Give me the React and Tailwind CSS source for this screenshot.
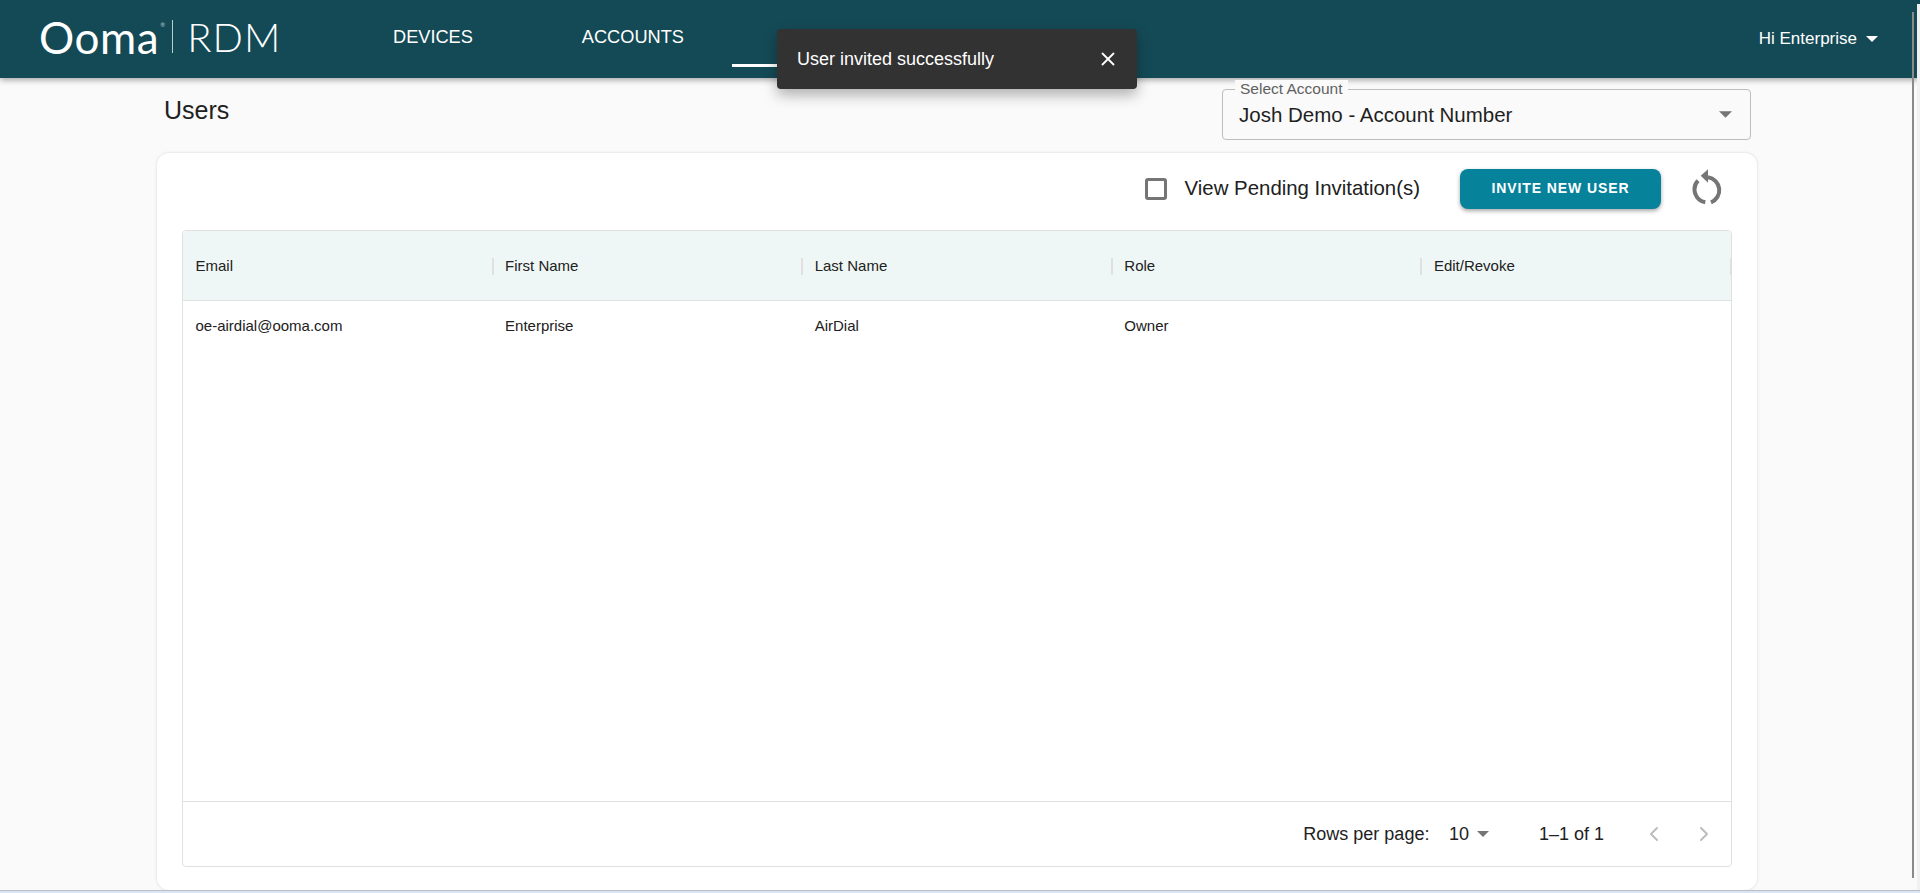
import React from 'react';
import { X, ChevronLeft, ChevronRight } from 'lucide-react';

const columns = ['Email', 'First Name', 'Last Name', 'Role', 'Edit/Revoke'];
const rows = [['oe-airdial@ooma.com', 'Enterprise', 'AirDial', 'Owner', '']];

const Caret = ({ className }) => (
  <svg viewBox="0 0 10 5" className={className} fill="currentColor">
    <path d="M0 0h10L5 5z" />
  </svg>
);

const RefreshIcon = () => (
  <svg viewBox="0 0 32 36" className="mb-[4px] h-9 w-8 text-[#757575]" fill="none" stroke="currentColor">
    <path d="M6 11.700A13 13 0 0 0 13.300 33.300" strokeWidth="4" />
    <path d="M19 33.300A13 13 0 0 0 16 8.300" strokeWidth="4" />
    <path d="M16 .3v13.400L8.700 6.700z" fill="currentColor" stroke="none" />
  </svg>
);

const Header = () => (
  <header className="flex h-[78px] shrink-0 items-center bg-[#144a56] pr-[42px] pl-[39px] text-white shadow-[0_2px_6px_rgba(0,0,0,0.35)]">
    <div className="flex w-[354px] items-center pb-[5px] font-['Lato',sans-serif]">
      <span className="text-[44px] leading-none tracking-[0.6px]">Ooma</span>
      <span className="relative -top-[12px] w-[7px] pl-[1px] text-[6px] leading-none text-[#b8cdd0]">®</span>
      <span className="ml-[6px] h-[33px] w-px bg-[#b8cdd0]" />
      <span className="ml-[14px] text-[40px] leading-none font-light tracking-[1px]">RDM</span>
    </div>
    <nav className="flex h-full items-center text-[18.2px]">
      <span className="mr-[109px] pb-[3px]">DEVICES</span>
      <span className="pb-[3px]">ACCOUNTS</span>
      <div className="relative ml-[48px] flex h-full w-[182px] items-center justify-center">
        <span className="pb-[3px]">USERS</span>
        <span className="absolute right-0 bottom-[11px] left-0 h-[3px] bg-white" />
      </div>
    </nav>
    <div className="ml-auto flex items-center gap-[9px] pb-[1px] text-[17px]">
      <span>Hi Enterprise</span>
      <Caret className="h-[6px] w-[12px]" />
    </div>
  </header>
);

const Toast = () => (
  <div className="absolute top-[29px] left-[777px] flex h-[60px] w-[360px] items-center justify-between rounded bg-[#323232] pr-[18px] pl-[20px] text-[18px] text-white shadow-[0_6px_14px_rgba(0,0,0,0.3)]">
    <span>User invited successfully</span>
    <X className="h-[22px] w-[22px]" strokeWidth={2} />
  </div>
);

const AccountSelect = () => (
  <div className="relative flex h-[51px] w-[529px] items-center justify-between rounded border border-[#bdbdbd] pr-[18px] pl-[16px] text-[20.500px] text-[#1f1f1f]">
    <span className="absolute -top-[10px] left-[12px] bg-[#fafafa] px-[5px] text-[15.500px] leading-[18px] text-[#616161]">Select Account</span>
    <span className="pt-[1px]">Josh Demo - Account Number</span>
    <Caret className="h-[7px] w-[13px] text-[#757575]" />
  </div>
);

const Toolbar = () => (
  <div className="flex h-[71px] items-center justify-end pr-[33px]">
    <span className="mr-[18px] h-[22px] w-[22px] rounded-[3px] border-[3px] border-[#757575]" />
    <span className="mr-[40px] pb-[1px] text-[20.400px] text-[#212121]">View Pending Invitation(s)</span>
    <button className="mr-[31px] h-[40px] w-[201px] rounded-lg bg-[#06829b] text-[14px] font-bold tracking-[0.9px] text-white shadow-[0_2px_4px_rgba(0,0,0,0.35)]">INVITE NEW USER</button>
    <RefreshIcon />
  </div>
);

const UsersTable = () => (
  <div className="mx-[25px] mt-[6px] flex h-[637px] flex-col rounded border border-[#e0e0e0]">
    <div className="grid h-[70px] shrink-0 grid-cols-5 rounded-t border-b border-[#e0e0e0] bg-[#eff7f6]">
      {columns.map((col) => (
        <div key={col} className="flex items-center justify-between pt-[2px] text-[15px] text-[#212121]">
          <span className="pl-[12.500px]">{col}</span>
          <span className="-mr-[1px] h-[17px] w-[2px] bg-[#e0e0e0]" />
        </div>
      ))}
    </div>
    <div className="flex-1">
      {rows.map((row) => (
        <div key={row[0]} className="grid h-[50px] grid-cols-5 items-center text-[15px] text-[#212121]">
          {row.map((cell, i) => (
            <span key={i} className="pl-[12.500px]">{cell}</span>
          ))}
        </div>
      ))}
    </div>
    <div className="flex h-[65px] shrink-0 items-center justify-end border-t border-[#e0e0e0] pr-[15px] text-[18px] text-[#212121]">
      <span>Rows per page:</span>
      <span className="ml-[19.500px]">10</span>
      <Caret className="ml-[8px] h-[6px] w-[12px] text-[#757575]" />
      <span className="ml-[50px]">1–1 of 1</span>
      <ChevronLeft className="ml-[38px] h-[24px] w-[24px] text-[#bdbdbd]" />
      <ChevronRight className="ml-[26px] h-[24px] w-[24px] text-[#bdbdbd]" />
    </div>
  </div>
);

export default function App() {
  return (
    <div className="relative flex h-[893px] flex-col overflow-hidden bg-[#fafafa] font-['Liberation_Sans',Arial,sans-serif]">
      <Header />
      <div className="flex flex-1 flex-col pr-[163px] pl-[157px]">
        <div className="flex h-[75px] shrink-0 items-start justify-between pr-[6px] pl-[7px]">
          <h1 className="pt-[17px] text-[25px] leading-[30px] text-[#212121]">Users</h1>
          <div className="pt-[11px]"><AccountSelect /></div>
        </div>
        <main className="flex-1 rounded-xl bg-white shadow-[0_0_3px_rgba(0,0,0,0.15)]">
          <Toolbar />
          <UsersTable />
        </main>
      </div>
      <div className="h-[3px] shrink-0 border-t border-[#b9bfca] bg-[#dbe5f1]" />
      <Toast />
      <div className="absolute top-[12px] right-[6px] h-[866px] w-[2px] bg-[#8a8a8a]" />
      <div className="absolute top-[4px] right-0 h-[886px] w-[3px] bg-[#f1f1f1]" />
    </div>
  );
}
